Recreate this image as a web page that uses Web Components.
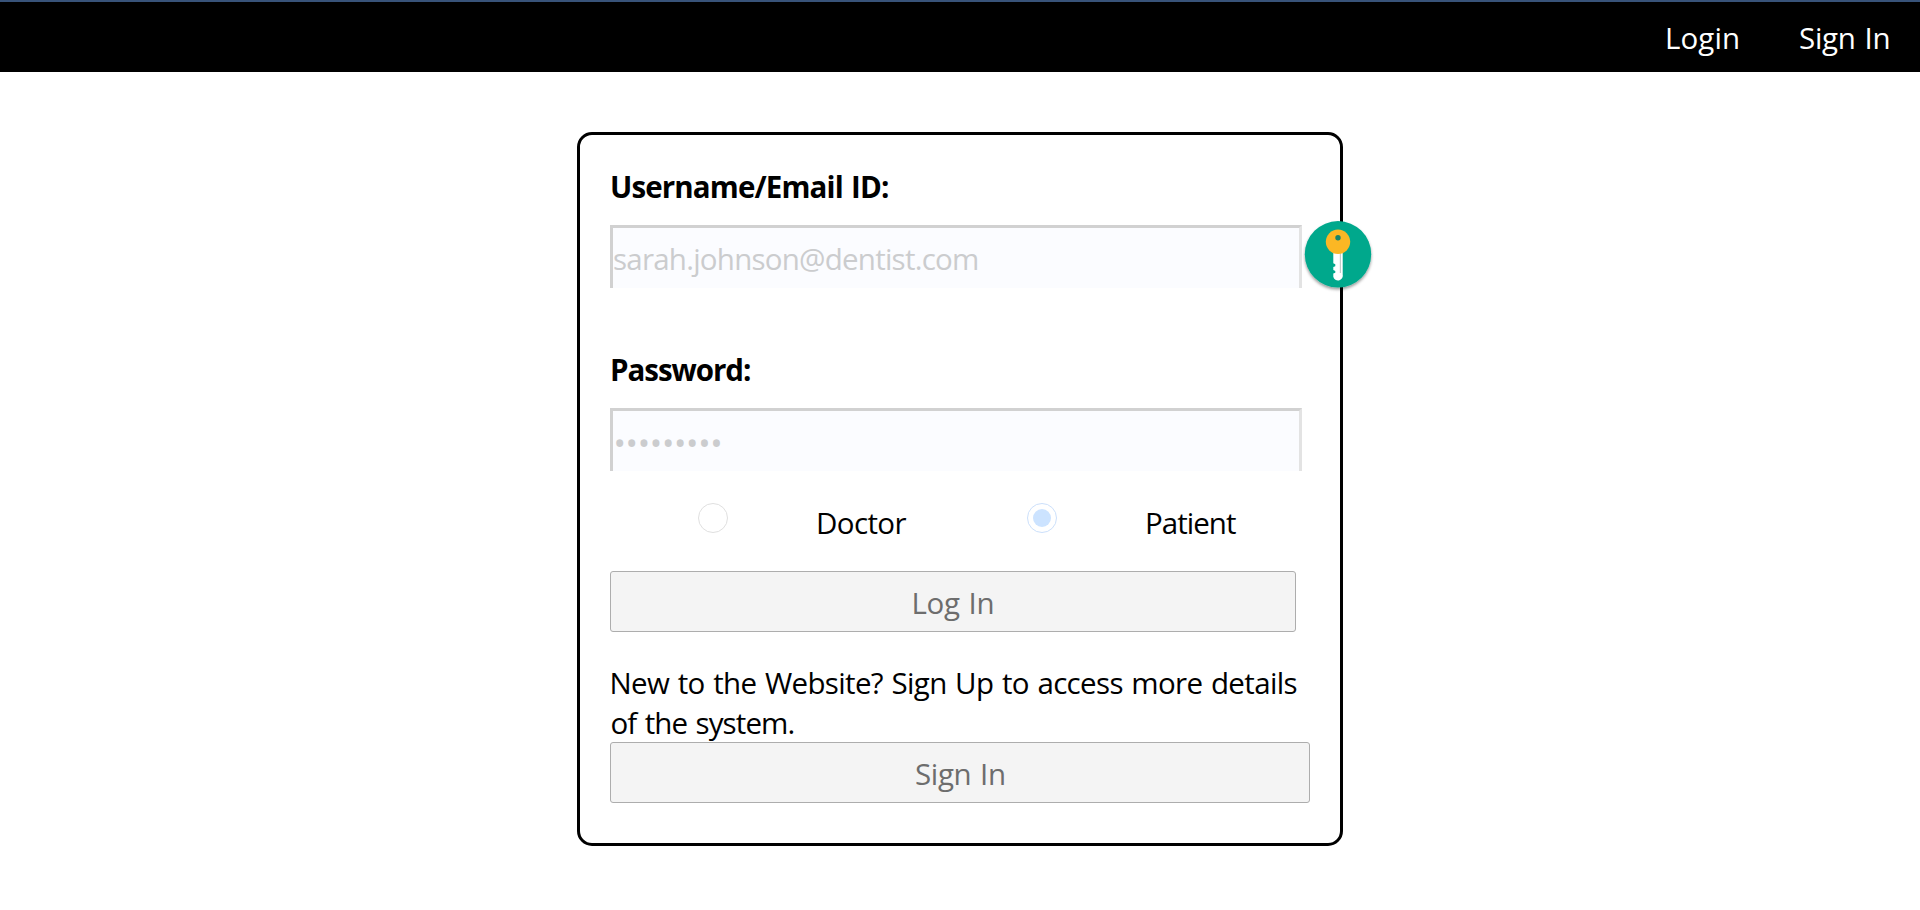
<!DOCTYPE html>
<html lang="en">
<head>
<meta charset="utf-8">
<title>Login</title>
<style>
html,body{margin:0;background:#fff}
body{font:29.5px/40px "Open Sans","Noto Sans",sans-serif;color:#000;overflow:hidden}
</style>
</head>
<body>
<login-page></login-page>
<script>
const define = (name, html, ready) => customElements.define(name, class extends HTMLElement {
  connectedCallback() {
    if (this.shadowRoot) return;
    const t = document.createElement('template');
    t.innerHTML = html;
    this.attachShadow({mode: 'open'}).append(t.content.cloneNode(true));
    if (ready) ready(this, this.shadowRoot);
  }
});

// Single line of text whose tracking is set so that its glyphs span `ink` pixels.
const pen = document.createElement('canvas').getContext('2d');
const WORD_GAP = 1.5;
define('fit-text', `<style>:host{display:block;white-space:nowrap;height:40px;flex:none}span{display:inline-block;word-spacing:${WORD_GAP}px}</style><span><slot></slot></span>`, (el, root) => {
  const s = getComputedStyle(el), text = el.textContent, ink = +el.getAttribute('ink');
  pen.font = `${s.fontWeight} ${s.fontSize} ${s.fontFamily}`;
  const m = pen.measureText(text), left = -m.actualBoundingBoxLeft;
  const gaps = (text.split(' ').length - 1) * WORD_GAP;
  const span = root.querySelector('span');
  span.style.letterSpacing = (ink - gaps - (m.actualBoundingBoxRight - left)) / (text.length - 1) + 'px';
  span.style.marginLeft = -left + 'px';
  el.style.width = ink + 'px';
});

define('nav-bar', `<style>
:host{display:flex;justify-content:flex-end;box-sizing:border-box;height:72px;border-top:2px solid #385379;background:#000;color:#fff;padding:16px 31.5px 0 0;gap:62px}
</style><fit-text ink="71">Login</fit-text><fit-text ink="88.5">Sign In</fit-text>`);

define('key-badge', `<style>:host{display:block;width:76px;height:78px}svg{display:block}</style>
<svg width="76" height="78" viewBox="0 0 76 78">
<defs><filter id="s" x="-20%" y="-20%" width="140%" height="140%"><feDropShadow dx="0" dy="2" stdDeviation="1.5" flood-color="#000" flood-opacity=".4"/></filter></defs>
<circle cx="38" cy="38.3" r="33.2" fill="#05a88c" filter="url(#s)"/>
<path d="M33.3 34h9.4v24.7a4.7 4.7 0 0 1-9.4 2v-3.2l2-.7v-1.8l-2-1v-3l2-.8v-2l-2-1z" fill="#fff"/>
<path d="M40.4 35v22" stroke="#c2cbc8" stroke-width="1.2"/>
<circle cx="38" cy="25.8" r="12.2" fill="#fbb724"/>
<circle cx="38" cy="21.7" r="2.7" fill="#16836a"/>
</svg>`);

define('form-field', `<style>
:host{display:block;position:relative}
::slotted([slot=label]){font-weight:700}
.box{box-sizing:border-box;width:692px;height:63px;margin-top:18px;background:#fbfcff;border:solid #d1d1d1;border-width:3px 3px 0;border-right-color:#e3e3e3;color:#cbccce;padding:11px 0 0 1px}
</style><slot name="label"></slot><div class="box"><slot></slot></div>`);

define('role-option', `<style>
:host{display:flex;width:329px;padding-left:88px;box-sizing:border-box;gap:90px}
i{display:flex;flex:none;align-items:center;justify-content:center;box-sizing:border-box;width:30px;height:30px;border:1px solid #e0e0e0;border-radius:50%}
:host([checked]) i{border-color:#cce0fb}
:host([checked]) i::after{content:"";width:18px;height:18px;border-radius:50%;background:#cce3ff}
</style><i></i><slot></slot>`);

define('disabled-button', `<style>
:host{display:flex;justify-content:center;box-sizing:border-box;height:61px;border:1px solid #adadad;border-radius:3px;background:#f4f4f4;color:#6d6d6d;padding-top:11px}
</style><slot></slot>`);

define('login-page', `<style>
:host{display:block}
.card{box-sizing:border-box;width:766px;height:714px;margin:60px 0 0 577px;border:3px solid #000;border-radius:15px;padding:32px 0 0 30px}
.second{margin-top:62px}
.holder{position:relative}
key-badge{position:absolute;left:690px;top:49px}
.roles{display:flex;margin-top:32px}
.dots{font-size:33px;margin:1px 0 0 1.5px}
.login{width:686px;margin-top:28px}
.note{margin:31px 0 -1px;padding-left:1.5px}
.signin{width:700px}
.indent{margin-left:2px}
</style>
<nav-bar></nav-bar>
<div class="card">
  <div class="holder">
    <form-field><fit-text slot="label" class="indent" ink="276">Username/Email ID:</fit-text><fit-text ink="363">sarah.johnson@dentist.com</fit-text></form-field>
    <key-badge></key-badge>
  </div>
  <form-field class="second"><fit-text slot="label" class="indent" ink="138">Password:</fit-text><fit-text class="dots" ink="104.8">•••••••••</fit-text></form-field>
  <div class="roles">
    <role-option><fit-text ink="88.5">Doctor</fit-text></role-option>
    <role-option checked><fit-text ink="89">Patient</fit-text></role-option>
  </div>
  <disabled-button class="login"><fit-text ink="79">Log In</fit-text></disabled-button>
  <div class="note"><fit-text ink="685">New to the Website? Sign Up to access more details</fit-text><fit-text ink="182">of the system.</fit-text></div>
  <disabled-button class="signin"><fit-text ink="88">Sign In</fit-text></disabled-button>
</div>`);
</script>
</body>
</html>
